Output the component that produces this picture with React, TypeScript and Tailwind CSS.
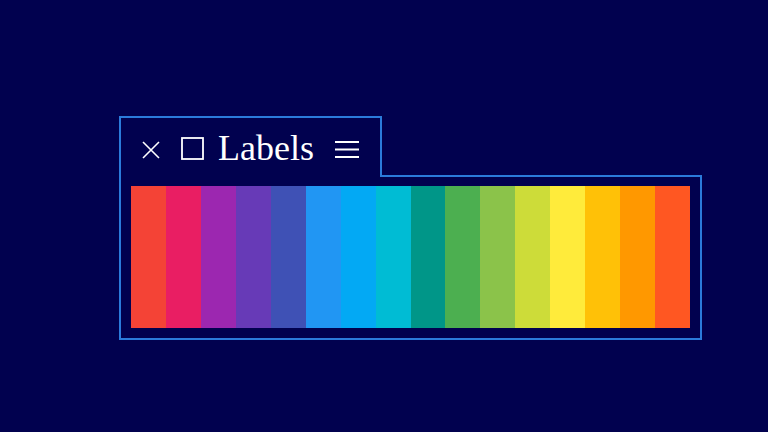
const STRIPES = [
  'bg-[#f44336]',
  'bg-[#e91e63]',
  'bg-[#9c27b0]',
  'bg-[#673ab7]',
  'bg-[#3f51b5]',
  'bg-[#2196f3]',
  'bg-[#03a9f4]',
  'bg-[#00bcd4]',
  'bg-[#009688]',
  'bg-[#4caf50]',
  'bg-[#8bc34a]',
  'bg-[#cddc39]',
  'bg-[#ffeb3b]',
  'bg-[#ffc107]',
  'bg-[#ff9800]',
  'bg-[#ff5722]',
]

export default function App() {
  return (
    <div className="h-[432px] w-[768px] overflow-hidden bg-[#01014f] pl-[119px] pt-[116px]">
      <div className="flex w-[583px] flex-col">
        {/* tab row */}
        <div className="flex h-[61px]">
          <div className="flex items-center border-l-2 border-r-2 border-t-2 border-[#2b7bdb] pl-[21px] pr-[21px] text-white">
            <svg width="18" height="18" viewBox="0 0 18 18" className="mt-[4px]">
              <path d="M1 1 L17 17 M17 1 L1 17" stroke="white" strokeWidth="1.6" fill="none" />
            </svg>
            <svg width="23" height="23" viewBox="0 0 23 23" className="ml-[21px] mt-[2px]">
              <rect x="1" y="1" width="21" height="21" stroke="white" strokeWidth="1.8" fill="none" />
            </svg>
            <span
              className="ml-[14px] text-[36px] leading-none text-white"
              style={{ fontFamily: '"Liberation Serif", "DejaVu Serif", serif' }}
            >
              Labels
            </span>
            <svg width="24" height="17" viewBox="0 0 24 17" className="ml-[21px] mt-[3px]">
              <path d="M0 1 H24 M0 8.5 H24 M0 16 H24" stroke="white" strokeWidth="1.8" fill="none" />
            </svg>
          </div>
          <div className="flex-1 border-b-2 border-[#2b7bdb]" />
        </div>
        {/* panel */}
        <div className="border-b-2 border-l-2 border-r-2 border-[#2b7bdb] px-[10px] pb-[10px] pt-[9px]">
          <div className="flex h-[142px]">
            {STRIPES.map((c) => (
              <div key={c} className={`flex-1 ${c}`} />
            ))}
          </div>
        </div>
      </div>
    </div>
  )
}
